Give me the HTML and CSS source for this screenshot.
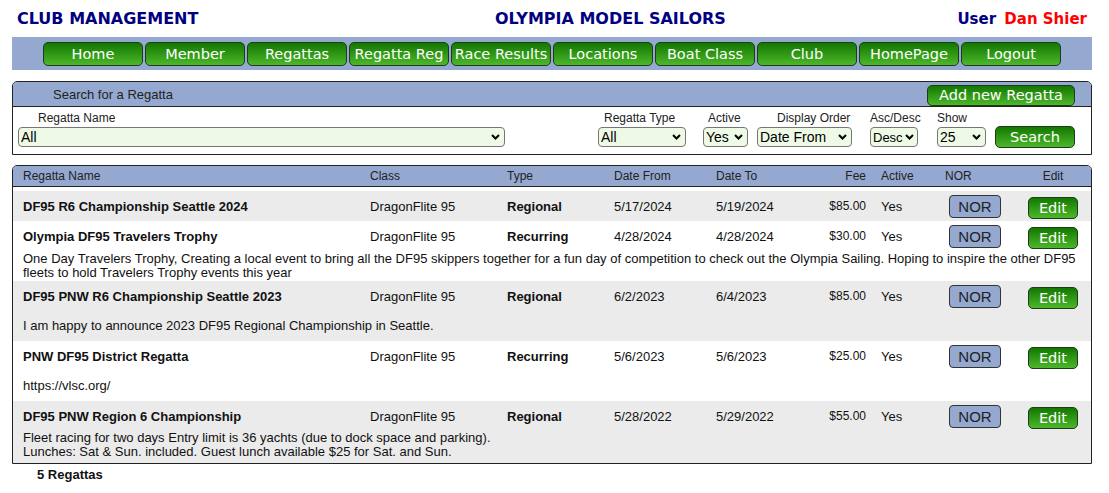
FILE: index.html
```html
<html>

<head>
	<meta charset="utf-8">
	<title>Club Management - Regattas</title>
	<link rel="stylesheet" href="styles.css">
</head>

<body>
	<div class="page">
		<div class="top">
			<div class="title-left">CLUB MANAGEMENT</div>
			<div class="title-mid">OLYMPIA MODEL SAILORS</div>
			<div class="user">User <span class="user-name">Dan Shier</span></div>
		</div>

		<div class="nav">
			<button class="green-btn nav-btn">Home</button>
			<button class="green-btn nav-btn">Member</button>
			<button class="green-btn nav-btn">Regattas</button>
			<button class="green-btn nav-btn">Regatta Reg</button>
			<button class="green-btn nav-btn">Race Results</button>
			<button class="green-btn nav-btn">Locations</button>
			<button class="green-btn nav-btn">Boat Class</button>
			<button class="green-btn nav-btn">Club</button>
			<button class="green-btn nav-btn">HomePage</button>
			<button class="green-btn nav-btn">Logout</button>
		</div>

		<div class="panel search-panel">
			<div class="panel-head">
				<span class="search-title">Search for a Regatta</span>
				<button class="green-btn add-btn">Add new Regatta</button>
			</div>
			<div class="search-body">
				<div class="field f-name">
					<label>Regatta Name</label>
					<select class="sel-name"><option>All</option></select>
				</div>
				<div class="field f-type">
					<label>Regatta Type</label>
					<select class="sel-type"><option>All</option></select>
				</div>
				<div class="field f-active">
					<label>Active</label>
					<select class="sel-active"><option>Yes</option></select>
				</div>
				<div class="field f-order">
					<label>Display Order</label>
					<select class="sel-order"><option>Date From</option></select>
				</div>
				<div class="field f-asc">
					<label>Asc/Desc</label>
					<select class="sel-asc"><option>Desc</option></select>
				</div>
				<div class="field f-show">
					<label>Show</label>
					<select class="sel-show"><option>25</option></select>
				</div>
				<button class="green-btn search-btn">Search</button>
			</div>
		</div>

		<div class="panel list-panel">
			<table class="regattas">
				<colgroup>
					<col style="width:357px">
					<col style="width:137px">
					<col style="width:107px">
					<col style="width:102px">
					<col style="width:100px">
					<col style="width:60px">
					<col style="width:59px">
					<col style="width:80px">
					<col style="width:76px">
				</colgroup>
				<thead>
					<tr>
						<th class="c-name">Regatta Name</th>
						<th>Class</th>
						<th>Type</th>
						<th>Date From</th>
						<th>Date To</th>
						<th class="c-fee">Fee</th>
						<th class="c-active">Active</th>
						<th class="c-nor">NOR</th>
						<th class="c-edit">Edit</th>
					</tr>
				</thead>
				<tbody>
					<tr class="spacer"><td colspan="9"></td></tr>

					<tr class="main gray">
						<td class="c-name">DF95 R6 Championship Seattle 2024</td>
						<td>DragonFlite 95</td>
						<td class="c-type">Regional</td>
						<td>5/17/2024</td>
						<td>5/19/2024</td>
						<td class="c-fee">$85.00</td>
						<td class="c-active">Yes</td>
						<td class="c-nor"><button class="nor-btn">NOR</button></td>
						<td class="c-edit"><button class="green-btn edit-btn">Edit</button></td>
					</tr>

					<tr class="main">
						<td class="c-name">Olympia DF95 Travelers Trophy</td>
						<td>DragonFlite 95</td>
						<td class="c-type">Recurring</td>
						<td>4/28/2024</td>
						<td>4/28/2024</td>
						<td class="c-fee">$30.00</td>
						<td class="c-active">Yes</td>
						<td class="c-nor"><button class="nor-btn">NOR</button></td>
						<td class="c-edit"><button class="green-btn edit-btn">Edit</button></td>
					</tr>
					<tr class="desc">
						<td colspan="9">One Day Travelers Trophy, Creating a local event to bring all the DF95 skippers together for a fun day of competition to check out the Olympia Sailing. Hoping to inspire the other DF95 fleets to hold Travelers Trophy events this year</td>
					</tr>

					<tr class="main gray">
						<td class="c-name">DF95 PNW R6 Championship Seattle 2023</td>
						<td>DragonFlite 95</td>
						<td class="c-type">Regional</td>
						<td>6/2/2023</td>
						<td>6/4/2023</td>
						<td class="c-fee">$85.00</td>
						<td class="c-active">Yes</td>
						<td class="c-nor"><button class="nor-btn">NOR</button></td>
						<td class="c-edit"><button class="green-btn edit-btn">Edit</button></td>
					</tr>
					<tr class="desc gray">
						<td colspan="9">I am happy to announce 2023 DF95 Regional Championship in Seattle.</td>
					</tr>

					<tr class="main">
						<td class="c-name">PNW DF95 District Regatta</td>
						<td>DragonFlite 95</td>
						<td class="c-type">Recurring</td>
						<td>5/6/2023</td>
						<td>5/6/2023</td>
						<td class="c-fee">$25.00</td>
						<td class="c-active">Yes</td>
						<td class="c-nor"><button class="nor-btn">NOR</button></td>
						<td class="c-edit"><button class="green-btn edit-btn">Edit</button></td>
					</tr>
					<tr class="desc">
						<td colspan="9">https://vlsc.org/</td>
					</tr>

					<tr class="main gray">
						<td class="c-name">DF95 PNW Region 6 Championship</td>
						<td>DragonFlite 95</td>
						<td class="c-type">Regional</td>
						<td>5/28/2022</td>
						<td>5/29/2022</td>
						<td class="c-fee">$55.00</td>
						<td class="c-active">Yes</td>
						<td class="c-nor"><button class="nor-btn">NOR</button></td>
						<td class="c-edit"><button class="green-btn edit-btn">Edit</button></td>
					</tr>
					<tr class="desc gray last">
						<td colspan="9">Fleet racing for two days Entry limit is 36 yachts (due to dock space and parking).<br>Lunches: Sat &amp; Sun. included. Guest lunch available $25 for Sat. and Sun.</td>
					</tr>
				</tbody>
			</table>
		</div>

		<div class="count">5 Regattas</div>
	</div>
</body>

</html>
```

FILE: styles.css
```css
body {
	margin: 0;
	padding: 0;
	background-color: #fff;
	font-family: "Liberation Sans", Arial, sans-serif;
	color: #111;
}

.page {
	width: 1080px;
	margin-left: 12px;
}

/* top titles */
.top {
	display: flex;
	align-items: center;
	height: 37px;
	font-family: "DejaVu Sans", Verdana, sans-serif;
	font-weight: bold;
	font-size: 16px;
	color: #000080;
}

.title-left {
	width: 478px;
	padding-left: 5px;
}

.user {
	margin-left: auto;
	margin-right: 5px;
	font-size: 15px;
}

.user-name {
	color: #f00;
	margin-left: 3px;
}

/* buttons */
.green-btn {
	background: linear-gradient(#127800, #4db72b);
	border: 1px solid #1e3b1a;
	border-radius: 5px;
	color: #fff;
	font-family: "DejaVu Sans", Verdana, sans-serif;
	font-size: 14.5px;
	padding: 0;
	cursor: pointer;
	white-space: nowrap;
}

/* nav bar */
.nav {
	display: flex;
	justify-content: center;
	align-items: center;
	gap: 2px;
	height: 33px;
	background-color: #94a8d0;
}

.nav-btn {
	width: 100px;
	height: 24px;
	line-height: 22px;
}

/* panels */
.panel {
	border: 1px solid #222;
	border-radius: 5px 5px 0 0;
	overflow: hidden;
}

.search-panel {
	margin-top: 11px;
}

.panel-head {
	display: flex;
	align-items: center;
	height: 24px;
	padding: 0 16px 0 40px;
	background-color: #94a8d0;
	border-bottom: 1px solid #222;
}

.search-title {
	font-size: 13px;
	color: #222;
}

.add-btn {
	margin-left: auto;
	width: 148px;
	height: 21px;
	line-height: 19px;
	margin-top: 2px;
}

.search-body {
	display: flex;
	align-items: flex-end;
	padding: 4px 0 7px 5px;
}

.field {
	display: flex;
	flex-direction: column;
}

.field label {
	font-size: 12px;
	line-height: 14px;
	color: #222;
	margin-bottom: 2px;
	white-space: nowrap;
}

/* selects with a small bold chevron on the right */
.field select {
	-webkit-appearance: none;
	appearance: none;
	width: 100%;
	height: 20px;
	border: 1px solid #767676;
	border-radius: 4px;
	background-color: #eefae6;
	background-image: url("data:image/svg+xml;utf8,<svg xmlns='http://www.w3.org/2000/svg' width='9' height='6' viewBox='0 0 9 6'><path d='M1 1 L4.5 4.5 L8 1' fill='none' stroke='black' stroke-width='2'/></svg>");
	background-repeat: no-repeat;
	background-position: right 4px center;
	font-family: "Liberation Sans", Arial, sans-serif;
	font-size: 14px;
	color: #000;
	padding: 0 12px 0 2px;
}

.field .sel-asc {
	font-size: 13px;
	background-position: right 3px center;
	padding-right: 11px;
}

.f-name { width: 487px; }
.f-name label { padding-left: 20px; }
.f-type { width: 88px; margin-left: 93px; }
.f-type label { padding-left: 6px; }
.f-active { width: 45px; margin-left: 17px; }
.f-active label { padding-left: 5px; }
.f-order { width: 95px; margin-left: 9px; }
.f-order label { padding-left: 20px; }
.f-asc { width: 48px; margin-left: 18px; }
.f-show { width: 49px; margin-left: 19px; }

.search-btn {
	margin-left: 9px;
	width: 80px;
	height: 22px;
	line-height: 20px;
	margin-bottom: -1px;
}

/* regatta list */
.list-panel {
	margin-top: 10px;
}

.regattas {
	width: 100%;
	table-layout: fixed;
	border-collapse: collapse;
	font-size: 13px;
}

.regattas th {
	background-color: #94a8d0;
	border-bottom: 1px solid #222;
	height: 20px;
	padding: 1px 0 0 0;
	font-weight: normal;
	font-size: 12px;
	color: #222;
	text-align: left;
}

.regattas td {
	padding: 0;
	white-space: nowrap;
	overflow: visible;
}

.regattas .c-name {
	padding-left: 10px;
}

.main td.c-name,
.main td.c-type {
	font-weight: bold;
}

.regattas .c-fee {
	text-align: right;
	padding-right: 10px;
}

.main td.c-fee {
	font-size: 12px;
}

.regattas .c-active {
	padding-left: 5px;
}

.regattas th.c-nor {
	padding-left: 10px;
}

.regattas .c-edit {
	text-align: center;
}

.spacer td {
	height: 5px;
}

.main td {
	height: 30px;
}

.gray td {
	background-color: #ebebeb;
}

.desc td {
	height: 30px;
	padding-left: 10px;
	padding-right: 5px;
	line-height: 14px;
	white-space: normal;
}

.desc.last td {
	padding-bottom: 4px;
}

.nor-btn {
	margin-left: 14px;
	width: 52px;
	height: 23px;
	background-color: #94a8d0;
	border: 1px solid #333;
	border-radius: 4px;
	font-family: "Liberation Sans", Arial, sans-serif;
	font-size: 15px;
	color: #222;
	padding: 0;
	margin-top: 1px;
}

.edit-btn {
	width: 50px;
	height: 22px;
	line-height: 20px;
	margin-top: 3px;
}

.count {
	padding-left: 25px;
	margin-top: 3px;
	font-size: 13px;
	font-weight: bold;
	line-height: 15px;
}
```
